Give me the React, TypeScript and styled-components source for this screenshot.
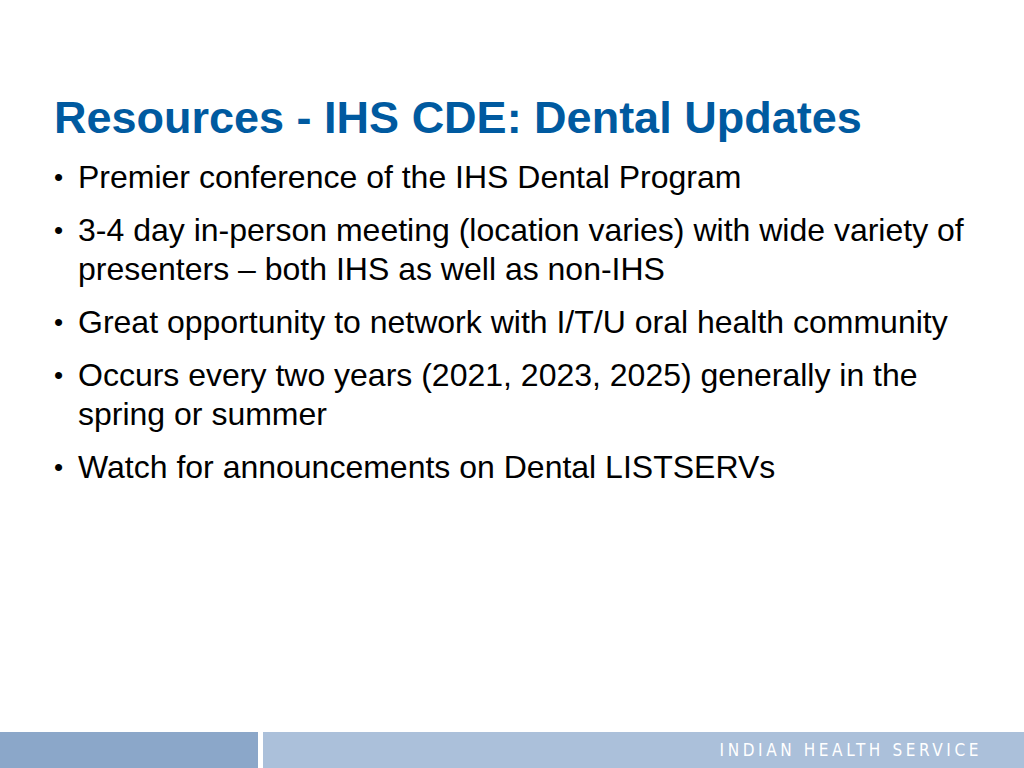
import React from "react";
import styled, { createGlobalStyle } from "styled-components";

const Global = createGlobalStyle`
  html, body { margin: 0; padding: 0; background: #fff; }
  body { font-family: "Liberation Sans", Arial, sans-serif; }
`;

const Slide = styled.div`
  width: 1024px; height: 768px; display: flex; flex-direction: column; overflow: hidden;
`;
const Content = styled.div`
  flex: 1; padding: 92px 30px 0 54px;
`;
const Title = styled.h1`
  margin: 0 0 14px; font-size: 45px; font-weight: bold; color: #005aa0; line-height: 52px;
`;
const List = styled.ul`
  margin: 0; padding: 0; list-style: none; display: flex; flex-direction: column; gap: 14px;
`;
const Item = styled.li`
  display: flex; font-size: 32px; line-height: 39px; color: #000;
  &::before { content: "•"; width: 24px; flex: none; font-size: 26px; }
`;
const Footer = styled.div`
  height: 36px; display: flex; gap: 5px;
`;
const FootLeft = styled.div`
  width: 258px; background: #8ba7c9;
`;
const FootRight = styled.div`
  flex: 1; background: #abc0da; display: flex; align-items: center; justify-content: flex-end;
  padding-right: 42px; color: #fff; font-family: "DejaVu Sans Condensed", "Liberation Sans Narrow", sans-serif;
  font-size: 17px; letter-spacing: 3.6px;
`;

const items = [
  "Premier conference of the IHS Dental Program",
  "3-4 day in-person meeting (location varies) with wide variety of presenters – both IHS as well as non-IHS",
  "Great opportunity to network with I/T/U oral health community",
  "Occurs every two years (2021, 2023, 2025) generally in the spring or summer",
  "Watch for announcements on Dental LISTSERVs",
];

export default function App() {
  return (
    <Slide>
      <Global />
      <Content>
        <Title>Resources - IHS CDE: Dental Updates</Title>
        <List>
          {items.map((t) => <Item key={t}>{t}</Item>)}
        </List>
      </Content>
      <Footer>
        <FootLeft />
        <FootRight>INDIAN HEALTH SERVICE</FootRight>
      </Footer>
    </Slide>
  );
}
